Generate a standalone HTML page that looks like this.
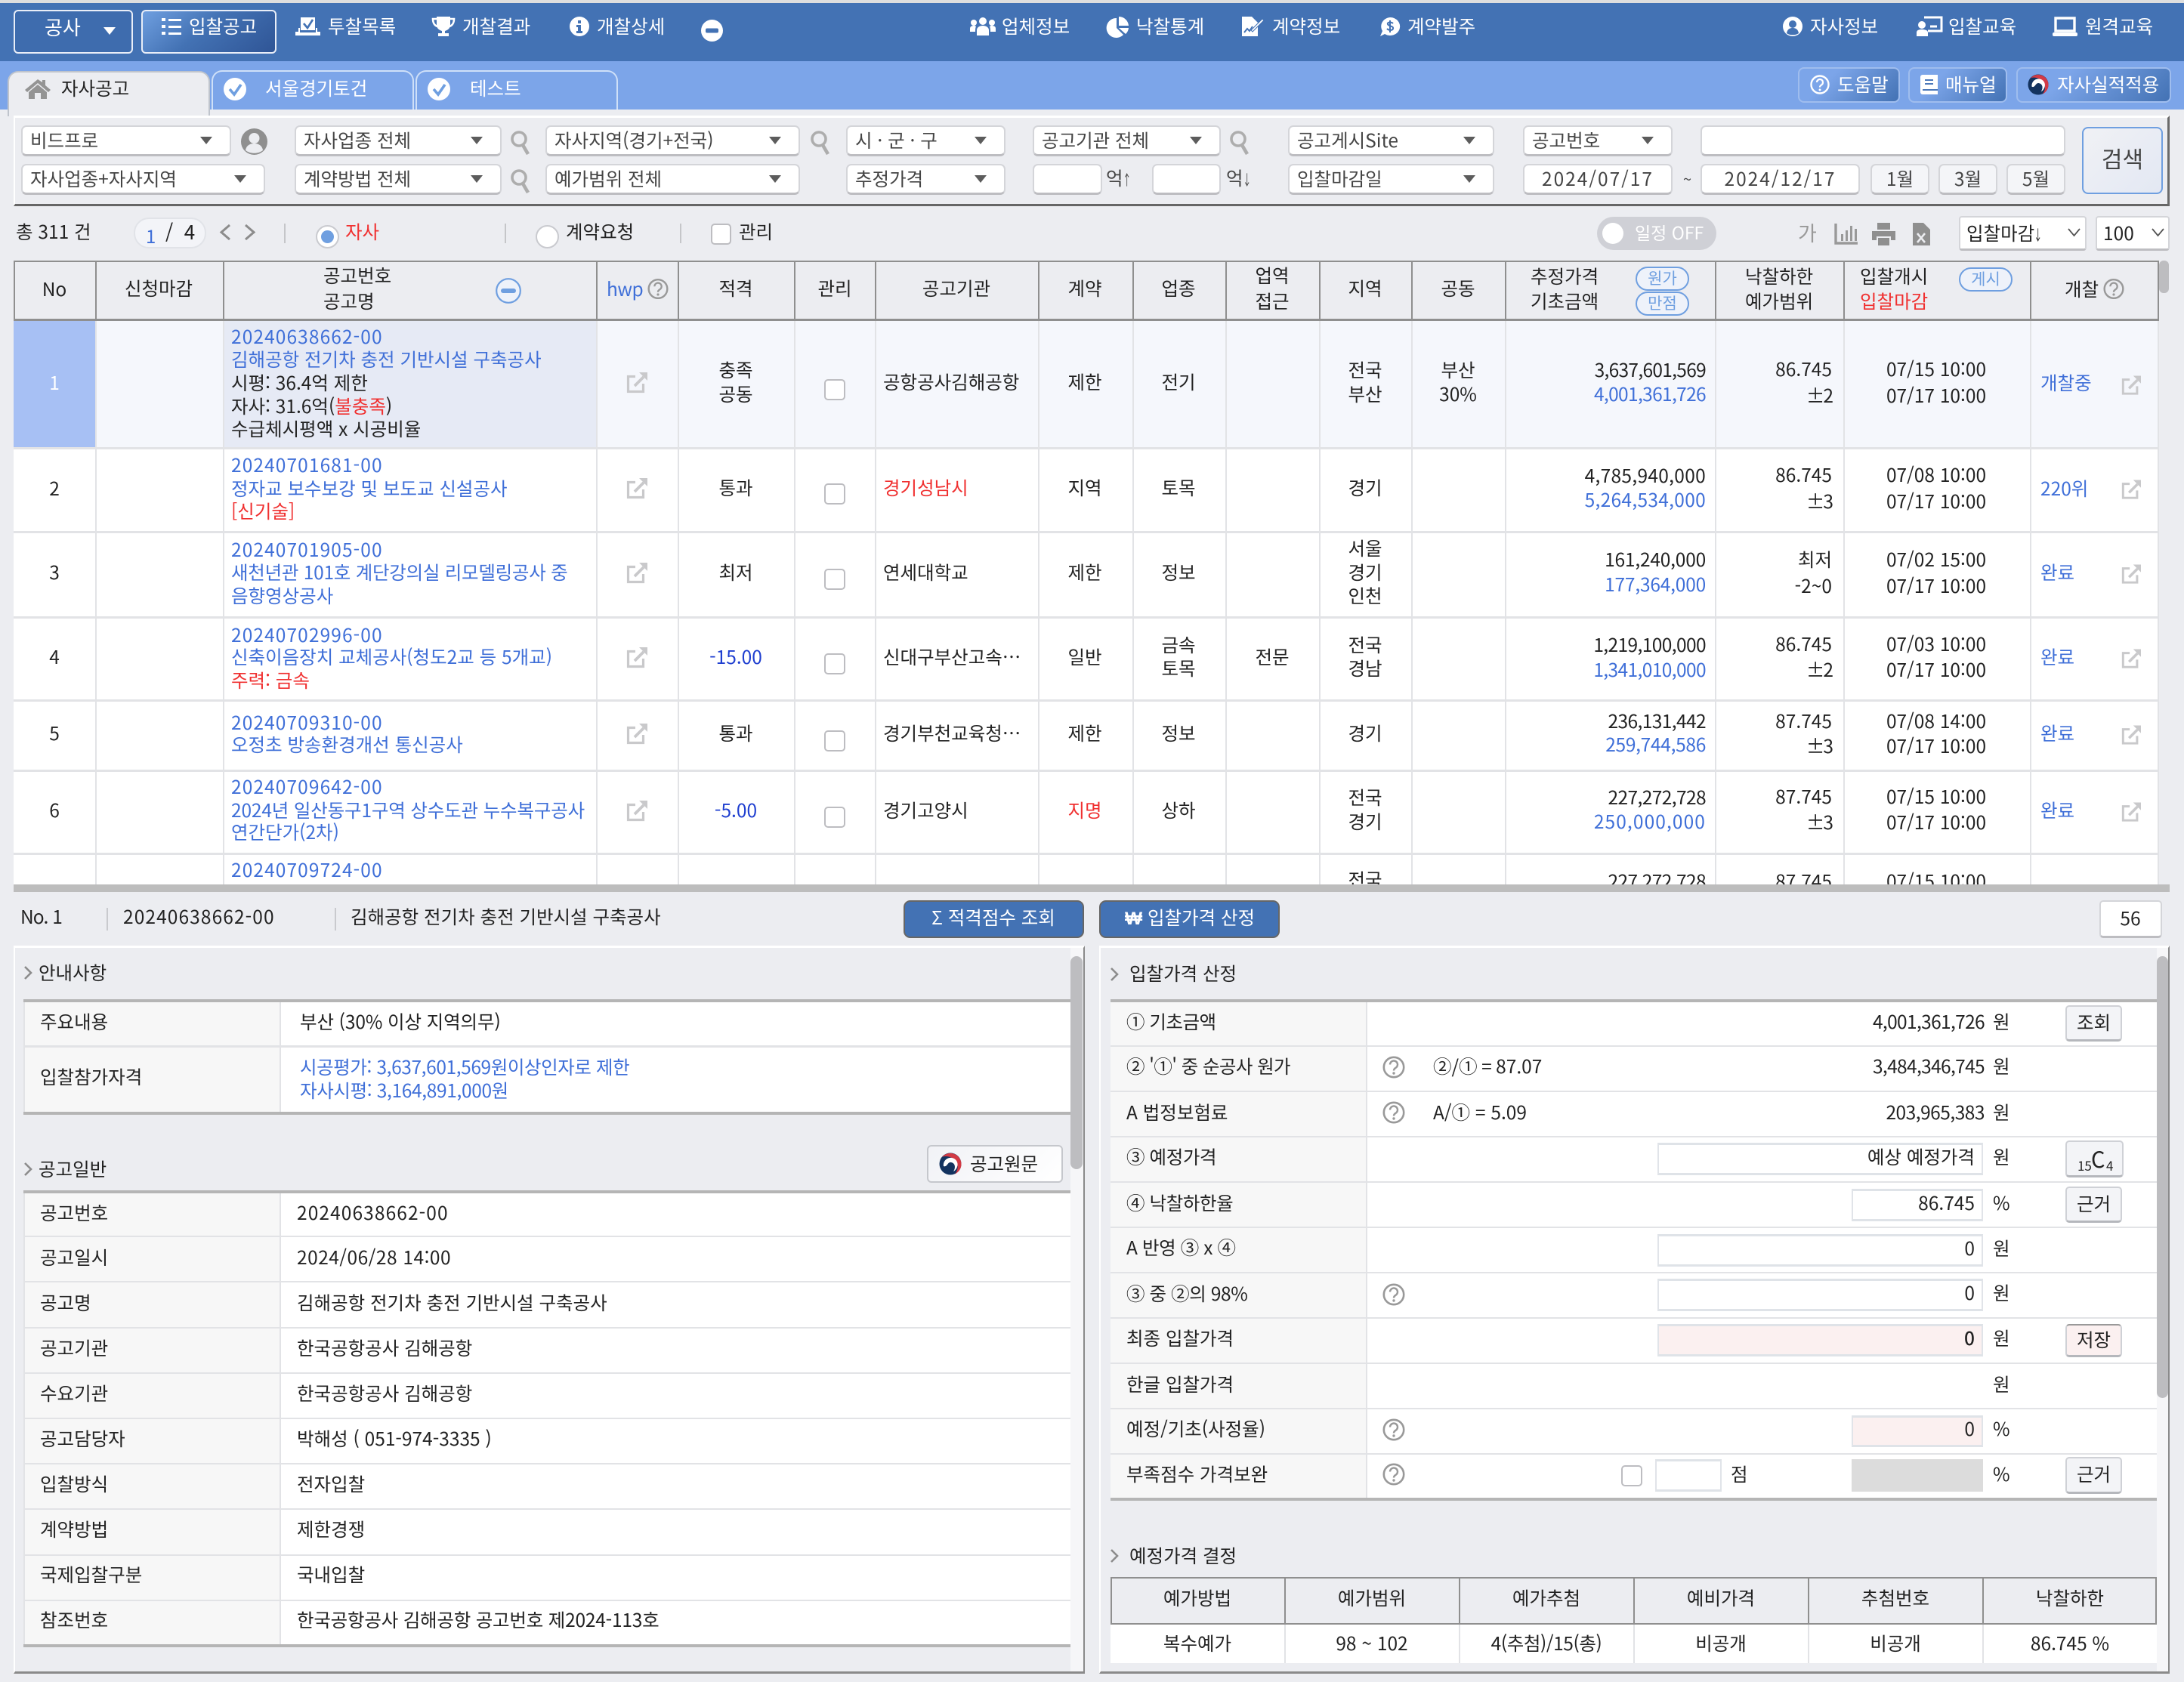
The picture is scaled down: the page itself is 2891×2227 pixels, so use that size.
<!DOCTYPE html>
<html lang="ko"><head><meta charset="utf-8"><title>입찰공고</title>
<style>
*{box-sizing:border-box}
html,body{margin:0;padding:0}
body{width:2891px;height:2227px;overflow:hidden;background:#ecedf1;position:relative;font-family:"Noto Sans CJK KR","Liberation Sans",sans-serif;font-size:24.5px;color:#222}
.a{position:absolute}
.t{position:absolute;white-space:nowrap;line-height:0}
.c{transform:translateX(-50%)}
.b{color:#3f6fd8}.r{color:#f03030}.w{color:#fff}.g{color:#444}
.s{position:absolute;background:#fff;border:2px solid #d4d5d9;border-bottom:3px solid #bdbdc1;border-radius:7px;line-height:36px;padding-left:10px;color:#444;white-space:nowrap;height:41px}
.s i{position:absolute;right:23px;top:13px;width:0;height:0;border-left:8px solid transparent;border-right:8px solid transparent;border-top:10px solid #5c5c5c}
.m{position:absolute;background:#f4f5f8;border:2px solid #d4d5d9;border-bottom:3px solid #bdbdc1;border-radius:7px;text-align:center;color:#444;white-space:nowrap}
.l{position:absolute}
.tb{position:absolute;background:#7ca5e9;border:2px solid #cfe0f8;border-bottom:0;border-radius:14px 14px 0 0}
.hb{position:absolute;border:2px solid #9fbdee;border-radius:8px;background:linear-gradient(135deg,#7ca5e9 30%,#4372b4 100%)}
.pill{position:absolute;border:2px solid #6f9fe0;border-radius:17px;background:#eef2fa;color:#6f9fe0;text-align:center;font-size:21px}
.cb{position:absolute;width:28px;height:28px;background:#fff;border:2px solid #bdbdc1;border-radius:5px}
.in{position:absolute;background:#fff;border:2px solid #e1e4e9;border-top:3px solid #dfe3e8;border-bottom:3px solid #dfe3e8;}
.btn{position:absolute;background:#f3f4f7;border:2px solid #cfd1d6;border-bottom:3px solid #b5b7bc;border-radius:5px;text-align:center;color:#222}
.ar{display:inline-block;font-size:19px;margin-left:-1px;transform:scaleX(.6);transform-origin:0 50%}
svg{position:absolute;overflow:visible}
</style></head><body>
<svg width="0" height="0" style="position:absolute"><defs>
<symbol id="ext" viewBox="0 0 28 28"><path d="M12 5.500H2.500v20h20V15" fill="none" stroke="#c9c9cb" stroke-width="3.200"/><path d="M11 18L23 6" fill="none" stroke="#c9c9cb" stroke-width="3.800"/><path d="M28 0v11L17 0z" fill="#c9c9cb"/></symbol>
<symbol id="q" viewBox="0 0 30 30"><circle cx="15" cy="15" r="13.200" fill="none" stroke="#999" stroke-width="2.600"/><path d="M10 11.500a5 5 0 1 1 7.500 4.300c-1.600 1-2.500 1.800-2.500 3.700" fill="none" stroke="#999" stroke-width="2.500"/><circle cx="15" cy="23" r="1.700" fill="#999"/></symbol>
<symbol id="mag" viewBox="0 0 26 34"><circle cx="11" cy="12" r="9" fill="none" stroke="#adadad" stroke-width="3.600"/><path d="M16 20l7 12" stroke="#adadad" stroke-width="4.600" fill="none"/></symbol>
<symbol id="tg" viewBox="0 0 30 30"><circle cx="15" cy="15" r="14.500" fill="#13335f"/><path d="M4 6A14.500 14.500 0 0 1 29.500 15 14.500 14.500 0 0 1 21 28.500C26 23 26 14 20 9 15 5 8 4 4 6z" fill="#d23a45"/><path d="M6 18C5 11 11 6 17 7c6 1 9 7 7 12-1 3-3 5-5 6 3-4 3-11-3-12-5-1-5 7-10 5z" fill="#fff"/></symbol>
<symbol id="chk" viewBox="0 0 30 30"><circle cx="15" cy="15" r="15" fill="#fff"/><path d="M8 15l6 7 9-13" fill="none" stroke="#6f9fe0" stroke-width="3.600"/></symbol>
</defs></svg>

<!-- top header -->
<div class="a" style="left:0;top:0;width:2891px;height:4px;background:#dedede"></div>
<div class="a" style="left:0;top:4px;width:2891px;height:77px;background:#4372b4"></div>
<div class="a" style="left:0;top:81px;width:2891px;height:64px;background:#7ca5e9"></div>

<div class="a" style="left:18px;top:13px;width:158px;height:58px;border:2px solid #e9eef8;border-radius:6px;background:#3e6cae"></div>
<div class="t w" style="left:59px;top:36px;font-size:26px">공사</div>
<div class="a" style="left:137px;top:36px;width:0;height:0;border-left:8px solid transparent;border-right:8px solid transparent;border-top:10px solid #fff"></div>
<div class="a" style="left:187px;top:13px;width:179px;height:58px;border:2px solid #e9eef8;border-radius:6px;background:linear-gradient(140deg,#6f9fe0 0%,#4372b4 45%,#2f5596 100%)"></div>
<svg style="left:214px;top:24px" width="27" height="22"><path d="M0 0h5v4H0zM0 9h5v4H0zM0 18h5v4H0zM9 1h17v3H9zM9 10h17v3H9zM9 19h17v3H9z" fill="#fff"/></svg>
<div class="t w" style="left:250px;top:35px">입찰공고</div>
<svg style="left:391px;top:23px" width="33" height="24"><path d="M7 0h19v17H7z" fill="#fff"/><path d="M11 8l5 6 7-11" fill="none" stroke="#4372b4" stroke-width="2.600"/><path d="M4 14v5H0v5h33v-5h-4v-5h-2v6H6v-6z" fill="#fff"/></svg>
<div class="t w" style="left:434px;top:35px">투찰목록</div>
<svg style="left:572px;top:22px" width="30" height="26"><path d="M6 0h18v11c0 5-4 7-7 8v3h5v4H8v-4h5v-3c-3-1-7-3-7-8z" fill="#fff"/><path d="M6 3H1c0 6 3 9 6 10M24 3h5c0 6-3 9-6 10" fill="none" stroke="#fff" stroke-width="2.600"/></svg>
<div class="t w" style="left:612px;top:35px">개찰결과</div>
<svg style="left:754px;top:22px" width="26" height="26"><circle cx="13" cy="13" r="13" fill="#fff"/><path d="M11 5h4v4h-4zM9 11h6v8h2v3H9v-3h2v-5H9z" fill="#4372b4"/></svg>
<div class="t w" style="left:790px;top:35px">개찰상세</div>
<svg style="left:928px;top:26px" width="29" height="29"><circle cx="14.500" cy="14.500" r="14.500" fill="#fff"/><rect x="6" y="11.500" width="17" height="6" rx="2" fill="#4372b4"/></svg>

<svg style="left:1284px;top:23px" width="34" height="24"><circle cx="17" cy="5" r="5" fill="#fff"/><circle cx="5" cy="7" r="4" fill="#fff"/><circle cx="29" cy="7" r="4" fill="#fff"/><path d="M9 24v-7c0-4 4-6 8-6s8 2 8 6v7zM0 19v-4c0-3 2-4 6-4l2 1c-1 2-1 4-1 7zM34 19v-4c0-3-2-4-6-4l-2 1c1 2 1 4 1 7z" fill="#fff"/></svg>
<div class="t w" style="left:1326px;top:35px">업체정보</div>
<svg style="left:1466px;top:22px" width="28" height="26"><path d="M12 2v13l9 9A13 13 0 1 1 12 2z" fill="#fff"/><path d="M15 0a13 13 0 0 1 13 12H15zM15 15h13a13 13 0 0 1-4 8z" fill="#fff"/></svg>
<div class="t w" style="left:1504px;top:35px">낙찰통계</div>
<svg style="left:1644px;top:22px" width="30" height="26"><path d="M0 0h13l8 8v18H0z" fill="#fff"/><path d="M3 21l4-5 3 3 4-6" stroke="#4372b4" stroke-width="2" fill="none"/><path d="M12 18L27 3l2 2-15 15z" fill="#fff" stroke="#4372b4"/></svg>
<div class="t w" style="left:1684px;top:35px">계약정보</div>
<svg style="left:1827px;top:23px" width="26" height="25"><path d="M13 0a13 12 0 1 1-7 22l-6 3 3-7A13 12 0 0 1 13 0z" fill="#fff"/><path d="M17 8c-2-2-8-2-7 1 1 3 8 2 7 6-1 3-6 2-8 0M13 4v16" stroke="#4372b4" stroke-width="2" fill="none"/></svg>
<div class="t w" style="left:1863px;top:35px">계약발주</div>
<svg style="left:2360px;top:22px" width="26" height="26"><circle cx="13" cy="13" r="13" fill="#fff"/><circle cx="13" cy="10" r="5" fill="#4372b4"/><path d="M5 22c1-6 5-7 8-7s7 1 8 7c-4 3-12 3-16 0z" fill="#4372b4"/></svg>
<div class="t w" style="left:2396px;top:35px">자사정보</div>
<svg style="left:2537px;top:22px" width="34" height="26"><path d="M10 1h23v18H15" fill="none" stroke="#fff" stroke-width="3"/><path d="M18 13h9" stroke="#fff" stroke-width="3"/><circle cx="7" cy="11" r="5" fill="#fff"/><path d="M0 26v-5c0-3 3-4 7-4s8 1 8 4v5z" fill="#fff"/></svg>
<div class="t w" style="left:2579px;top:35px">입찰교육</div>
<svg style="left:2717px;top:22px" width="33" height="26"><path d="M4 2h25v17H4z" fill="none" stroke="#fff" stroke-width="3.400"/><rect x="0" y="21" width="33" height="5" rx="2" fill="#fff"/></svg>
<div class="t w" style="left:2760px;top:35px">원격교육</div>

<!-- tabs -->
<div class="a" style="left:10px;top:94px;width:268px;height:60px;background:#ecedf1;border:2px solid #bfc4cc;border-bottom:0;border-radius:14px 14px 0 0"></div>
<svg style="left:33px;top:105px" width="34" height="26"><path d="M17 0L0 14l3 3L17 5l14 12 3-3-7-6V1h-4v3z" fill="#949494"/><path d="M5 17L17 7l12 10v9h-8v-8h-8v8H5z" fill="#949494"/></svg>
<div class="t" style="left:81px;top:117px">자사공고</div>
<div class="tb" style="left:280px;top:93px;width:268px;height:52px"></div>
<svg style="left:296px;top:103px" width="30" height="30"><use href="#chk"/></svg>
<div class="t w" style="left:351px;top:117px">서울경기토건</div>
<div class="tb" style="left:550px;top:93px;width:268px;height:52px"></div>
<svg style="left:566px;top:103px" width="30" height="30"><use href="#chk"/></svg>
<div class="t w" style="left:622px;top:117px">테스트</div>

<div class="hb" style="left:2380px;top:89px;width:135px;height:47px"></div>
<svg style="left:2396px;top:99px" width="26" height="26"><circle cx="13" cy="13" r="11.500" fill="none" stroke="#fff" stroke-width="2.400"/><path d="M9 10a4 4 0 1 1 6 3.500c-1.500 1-2 1.500-2 3" fill="none" stroke="#fff" stroke-width="2.200"/><circle cx="13" cy="20" r="1.500" fill="#fff"/></svg>
<div class="t w" style="left:2432px;top:112px">도움말</div>
<div class="hb" style="left:2526px;top:89px;width:131px;height:47px"></div>
<svg style="left:2542px;top:99px" width="23" height="26"><path d="M3 0h20v26H3a3 3 0 0 1-3-3V3a3 3 0 0 1 3-3z" fill="#fff"/><path d="M6 6h11v2H6zM6 11h11v2H6z" fill="#4b78ba"/><path d="M3 20h20" stroke="#4b78ba" stroke-width="2"/></svg>
<div class="t w" style="left:2575px;top:112px">매뉴얼</div>
<div class="hb" style="left:2669px;top:89px;width:205px;height:47px"></div>
<svg style="left:2683px;top:98px" width="30" height="28"><use href="#tg"/></svg>
<div class="t w" style="left:2723px;top:112px">자사실적적용</div>

<!-- search panel -->
<div class="a" style="left:18px;top:153px;width:2854px;height:120px;border-top:3px solid #fff;border-left:2px solid #fff;border-right:3px solid #6a6a6a;border-bottom:3px solid #666"></div>

<div class="s" style="left:28px;top:166px;width:278px">비드프로<i></i></div>
<svg style="left:319px;top:170px" width="35" height="35"><circle cx="17.500" cy="17.500" r="17.500" fill="#8f8f8f"/><circle cx="17.500" cy="13" r="7" fill="#ecedf1"/><path d="M6 29c1-7 7-9 11.500-9S28 22 29 29c-6 5-17 5-23 0z" fill="#ecedf1"/></svg>
<div class="s" style="left:28px;top:217px;width:323px">자사업종+자사지역<i></i></div>
<div class="s" style="left:390px;top:166px;width:274px">자사업종 전체<i></i></div>
<div class="s" style="left:390px;top:217px;width:274px">계약방법 전체<i></i></div>
<svg style="left:676px;top:172px" width="26" height="34"><use href="#mag"/></svg>
<svg style="left:676px;top:223px" width="26" height="34"><use href="#mag"/></svg>
<div class="s" style="left:722px;top:166px;width:337px">자사지역(경기+전국)<i></i></div>
<div class="s" style="left:722px;top:217px;width:337px">예가범위 전체<i></i></div>
<svg style="left:1073px;top:172px" width="26" height="34"><use href="#mag"/></svg>
<div class="s" style="left:1120px;top:166px;width:211px">시 · 군 · 구<i></i></div>
<div class="s" style="left:1120px;top:217px;width:211px">추정가격<i></i></div>
<div class="s" style="left:1367px;top:166px;width:249px">공고기관 전체<i></i></div>
<svg style="left:1628px;top:172px" width="26" height="34"><use href="#mag"/></svg>
<div class="s" style="left:1367px;top:217px;width:92px"></div>
<div class="t g" style="left:1464px;top:236px">억<span class="ar">↑</span></div>
<div class="s" style="left:1525px;top:217px;width:91px"></div>
<div class="t g" style="left:1623px;top:236px">억<span class="ar">↓</span></div>
<div class="s" style="left:1705px;top:166px;width:273px">공고게시Site<i></i></div>
<div class="s" style="left:1705px;top:217px;width:273px">입찰마감일<i></i></div>
<div class="s" style="left:2016px;top:166px;width:198px">공고번호<i></i></div>
<div class="s" style="left:2016px;top:217px;width:198px;padding-left:0;text-align:center;letter-spacing:2px">2024/07/17</div>
<div class="t g" style="left:2228px;top:237px;font-size:20px">~</div>
<div class="s" style="left:2251px;top:166px;width:483px"></div>
<div class="s" style="left:2251px;top:217px;width:211px;padding-left:0;text-align:center;letter-spacing:2px">2024/12/17</div>
<div class="m" style="left:2476px;top:217px;width:78px;height:41px;line-height:36px">1월</div>
<div class="m" style="left:2566px;top:217px;width:78px;height:41px;line-height:36px">3월</div>
<div class="m" style="left:2656px;top:217px;width:78px;height:41px;line-height:36px">5월</div>
<div class="a" style="left:2756px;top:168px;width:107px;height:89px;border:2px solid #6f9fe0;border-radius:8px;background:linear-gradient(135deg,#f0f1f5,#e3e8f3);text-align:center;line-height:78px;font-size:30px;color:#444">검색</div>

<!-- toolbar -->
<div class="t" style="left:21px;top:307px">총 311 건</div>
<div class="a" style="left:177px;top:288px;width:96px;height:41px;border:2px solid #e1e3e8;border-radius:20px;background:#f3f4f8"></div>
<div class="t b" style="left:193px;top:312px;font-size:24px">1</div>
<div class="t" style="left:219px;top:307px;font-size:26px">/ &nbsp;4</div>
<svg style="left:291px;top:297px" width="48" height="22"><path d="M13 1L2 10.500 13 20M34 1l11 9.500L34 20" fill="none" stroke="#8c8c8c" stroke-width="3"/></svg>
<div class="a" style="left:376px;top:296px;width:2px;height:26px;background:#c5c6c9"></div>
<div class="a" style="left:418px;top:298px;width:31px;height:31px;border:2px solid #c9cacf;border-radius:50%;background:#fff"></div>
<div class="a" style="left:425px;top:305px;width:17px;height:17px;border-radius:50%;background:#6f9fe0"></div>
<div class="t r" style="left:457px;top:307px">자사</div>
<div class="a" style="left:668px;top:296px;width:2px;height:26px;background:#c5c6c9"></div>
<div class="a" style="left:709px;top:298px;width:31px;height:31px;border:2px solid #c9cacf;border-radius:50%;background:#fff"></div>
<div class="t" style="left:749px;top:307px">계약요청</div>
<div class="a" style="left:900px;top:296px;width:2px;height:26px;background:#c5c6c9"></div>
<div class="cb" style="left:941px;top:296px;width:27px"></div>
<div class="t" style="left:978px;top:307px">관리</div>

<div class="a" style="left:2114px;top:287px;width:158px;height:44px;border-radius:22px;background:#cfd0d6"></div>
<div class="a" style="left:2121px;top:295px;width:28px;height:28px;border-radius:50%;background:#fff"></div>
<div class="t w" style="left:2164px;top:307px;font-size:23px">일정 OFF</div>
<div class="t" style="left:2380px;top:308px;color:#999;font-size:27px">가</div>
<svg style="left:2428px;top:296px" width="31" height="28"><path d="M2 0v26h29" fill="none" stroke="#999" stroke-width="3.400"/><path d="M9 14h3v9H9zM15 9h3v14h-3zM21 3h3v20h-3zM27 7h3v16h-3z" fill="#999"/></svg>
<svg style="left:2478px;top:295px" width="31" height="30"><path d="M7 0h17v9H7z" fill="#8f8f8f"/><path d="M0 11h31v12h-6v-5H6v5H0z" fill="#8f8f8f"/><path d="M8 20h15v10H8z" fill="#8f8f8f"/></svg>
<svg style="left:2532px;top:295px" width="23" height="30"><path d="M0 0h14l9 9v21H0z" fill="#8f8f8f"/><path d="M6 14l10 12M16 14L6 26" stroke="#ecedf1" stroke-width="2.600"/></svg>
<div class="a" style="left:2593px;top:286px;width:169px;height:46px;background:#fff;border:2px solid #d4d5d9;border-bottom:3px solid #bdbdc1;border-radius:4px"></div>
<div class="t" style="left:2603px;top:309px">입찰마감<span class="ar">↓</span></div>
<svg style="left:2737px;top:302px" width="17" height="11"><path d="M1 1l7.500 9L16 1" fill="none" stroke="#555" stroke-width="1.800"/></svg>
<div class="a" style="left:2774px;top:286px;width:98px;height:46px;background:#fff;border:2px solid #d4d5d9;border-bottom:3px solid #bdbdc1;border-radius:4px"></div>
<div class="t" style="left:2784px;top:309px">100</div>
<svg style="left:2848px;top:302px" width="17" height="11"><path d="M1 1l7.500 9L16 1" fill="none" stroke="#555" stroke-width="1.800"/></svg>

<!-- main table backgrounds -->
<div class="a" style="left:18px;top:423px;width:2838px;height:748px;background:#fff"></div>
<div class="a" style="left:18px;top:423px;width:2838px;height:170px;background:#f5f7fc"></div>
<div class="a" style="left:18px;top:423px;width:108px;height:170px;background:#a7c0f4"></div>
<div class="a" style="left:295px;top:423px;width:494px;height:170px;background:#e6eaf5"></div>
<!-- horizontal row lines -->
<div class="a" style="left:18px;top:592px;width:2838px;height:3px;background:#e2e3e6"></div>
<div class="a" style="left:18px;top:703px;width:2838px;height:3px;background:#e2e3e6"></div>
<div class="a" style="left:18px;top:816px;width:2838px;height:3px;background:#e2e3e6"></div>
<div class="a" style="left:18px;top:926px;width:2838px;height:3px;background:#e2e3e6"></div>
<div class="a" style="left:18px;top:1019px;width:2838px;height:3px;background:#e2e3e6"></div>
<div class="a" style="left:18px;top:1129px;width:2838px;height:3px;background:#e2e3e6"></div>
<!-- vertical lines -->
<div class="l" style="left:126px;top:423px;width:2px;height:748px;background:#e2e3e6"></div>
<div class="l" style="left:295px;top:423px;width:2px;height:748px;background:#e2e3e6"></div>
<div class="l" style="left:789px;top:423px;width:2px;height:748px;background:#e2e3e6"></div>
<div class="l" style="left:897px;top:423px;width:2px;height:748px;background:#e2e3e6"></div>
<div class="l" style="left:1051px;top:423px;width:2px;height:748px;background:#e2e3e6"></div>
<div class="l" style="left:1158px;top:423px;width:2px;height:748px;background:#e2e3e6"></div>
<div class="l" style="left:1374px;top:423px;width:2px;height:748px;background:#e2e3e6"></div>
<div class="l" style="left:1499px;top:423px;width:2px;height:748px;background:#e2e3e6"></div>
<div class="l" style="left:1622px;top:423px;width:2px;height:748px;background:#e2e3e6"></div>
<div class="l" style="left:1746px;top:423px;width:2px;height:748px;background:#e2e3e6"></div>
<div class="l" style="left:1868px;top:423px;width:2px;height:748px;background:#e2e3e6"></div>
<div class="l" style="left:1992px;top:423px;width:2px;height:748px;background:#e2e3e6"></div>
<div class="l" style="left:2270px;top:423px;width:2px;height:748px;background:#e2e3e6"></div>
<div class="l" style="left:2440px;top:423px;width:2px;height:748px;background:#e2e3e6"></div>
<div class="l" style="left:2687px;top:423px;width:2px;height:748px;background:#e2e3e6"></div>
<div class="l" style="left:2856px;top:423px;width:2px;height:748px;background:#e2e3e6"></div>
<!-- header -->
<div class="a" style="left:18px;top:345px;width:2840px;height:80px;border:2px solid #8f8f8f;border-bottom:3px solid #8f8f8f"></div>
<div class="l" style="left:126px;top:345px;width:2px;height:79px;background:#8f8f8f"></div>
<div class="l" style="left:295px;top:345px;width:2px;height:79px;background:#8f8f8f"></div>
<div class="l" style="left:789px;top:345px;width:2px;height:79px;background:#8f8f8f"></div>
<div class="l" style="left:897px;top:345px;width:2px;height:79px;background:#8f8f8f"></div>
<div class="l" style="left:1051px;top:345px;width:2px;height:79px;background:#8f8f8f"></div>
<div class="l" style="left:1158px;top:345px;width:2px;height:79px;background:#8f8f8f"></div>
<div class="l" style="left:1374px;top:345px;width:2px;height:79px;background:#8f8f8f"></div>
<div class="l" style="left:1499px;top:345px;width:2px;height:79px;background:#8f8f8f"></div>
<div class="l" style="left:1622px;top:345px;width:2px;height:79px;background:#8f8f8f"></div>
<div class="l" style="left:1746px;top:345px;width:2px;height:79px;background:#8f8f8f"></div>
<div class="l" style="left:1868px;top:345px;width:2px;height:79px;background:#8f8f8f"></div>
<div class="l" style="left:1992px;top:345px;width:2px;height:79px;background:#8f8f8f"></div>
<div class="l" style="left:2270px;top:345px;width:2px;height:79px;background:#8f8f8f"></div>
<div class="l" style="left:2440px;top:345px;width:2px;height:79px;background:#8f8f8f"></div>
<div class="l" style="left:2687px;top:345px;width:2px;height:79px;background:#8f8f8f"></div>
<div class="a" style="left:2858px;top:345px;width:13px;height:43px;background:#bdbdc0;border-radius:6px"></div>

<div class="t c" style="left:72px;top:383px">No</div>
<div class="t c" style="left:210px;top:382px">신청마감</div>
<div class="t" style="left:428px;top:365px">공고번호</div>
<div class="t" style="left:428px;top:399px">공고명</div>
<svg style="left:656px;top:368px" width="34" height="34"><circle cx="17" cy="17" r="15.800" fill="#eef2fa" stroke="#6f9fe0" stroke-width="2.200"/><rect x="7" y="14" width="20" height="6" rx="3" fill="#6f9fe0"/></svg>
<div class="t b" style="left:803px;top:383px;letter-spacing:-.5px">hwp</div>
<svg style="left:857px;top:368px" width="28" height="29"><use href="#q"/></svg>
<div class="t c" style="left:974px;top:382px">적격</div>
<div class="t c" style="left:1105px;top:382px">관리</div>
<div class="t c" style="left:1266px;top:382px">공고기관</div>
<div class="t c" style="left:1436px;top:382px">계약</div>
<div class="t c" style="left:1560px;top:382px">업종</div>
<div class="t c" style="left:1684px;top:365px">업역</div>
<div class="t c" style="left:1684px;top:399px">접근</div>
<div class="t c" style="left:1807px;top:382px">지역</div>
<div class="t c" style="left:1930px;top:382px">공동</div>
<div class="t" style="left:2026px;top:366px">추정가격</div>
<div class="t" style="left:2026px;top:399px">기초금액</div>
<div class="pill" style="left:2165px;top:353px;width:71px;height:32px;line-height:26px">원가</div>
<div class="pill" style="left:2165px;top:386px;width:71px;height:32px;line-height:26px">만점</div>
<div class="t" style="left:2310px;top:366px">낙찰하한</div>
<div class="t" style="left:2310px;top:399px">예가범위</div>
<div class="t" style="left:2462px;top:366px">입찰개시</div>
<div class="t r" style="left:2462px;top:399px">입찰마감</div>
<div class="pill" style="left:2593px;top:354px;width:71px;height:32px;line-height:26px">게시</div>
<div class="t" style="left:2733px;top:383px">개찰</div>
<svg style="left:2784px;top:368px" width="28" height="29"><use href="#q"/></svg>

<!-- Row 1 -->
<div class="t c w" style="left:72px;top:507px">1</div>
<div class="t b" style="left:306px;top:446px;letter-spacing:1.100px">20240638662-00</div>
<div class="t b" style="left:306px;top:476px">김해공항 전기차 충전 기반시설 구축공사</div>
<div class="t" style="left:306px;top:507px">시평: 36.4억 제한</div>
<div class="t" style="left:306px;top:538px">자사: 31.6억(<span class="r">불충족</span>)</div>
<div class="t" style="left:306px;top:568px">수급체시평액 x 시공비율</div>
<svg style="left:829px;top:493px" width="28" height="28"><use href="#ext"/></svg>
<div class="t c" style="left:974px;top:490px">충족</div>
<div class="t c" style="left:974px;top:522px">공동</div>
<div class="cb" style="left:1091px;top:502px"></div>
<div class="t" style="left:1169px;top:506px">공항공사김해공항</div>
<div class="t c" style="left:1436px;top:506px">제한</div>
<div class="t c" style="left:1560px;top:506px">전기</div>
<div class="t c" style="left:1807px;top:490px">전국</div>
<div class="t c" style="left:1807px;top:522px">부산</div>
<div class="t c" style="left:1930px;top:490px">부산</div>
<div class="t c" style="left:1930px;top:522px">30%</div>
<div class="t" style="right:633px;top:490px;letter-spacing:-.7px">3,637,601,569</div>
<div class="t b" style="right:633px;top:522px;letter-spacing:-.65px">4,001,361,726</div>
<div class="t" style="right:466px;top:489px">86.745</div>
<div class="t" style="right:466px;top:524px;letter-spacing:-2px">±2</div>
<div class="t c" style="left:2563px;top:489px">07/15 10:00</div>
<div class="t c" style="left:2563px;top:524px">07/17 10:00</div>
<div class="t b" style="left:2701px;top:507px">개찰중</div>
<svg style="left:2808px;top:497px" width="26" height="27"><use href="#ext"/></svg>

<!-- Row 2 -->
<div class="t c" style="left:72px;top:647px">2</div>
<div class="t b" style="left:306px;top:616px;letter-spacing:1.100px">20240701681-00</div>
<div class="t b" style="left:306px;top:647px">정자교 보수보강 및 보도교 신설공사</div>
<div class="t r" style="left:306px;top:677px">[신기술]</div>
<svg style="left:829px;top:633px" width="28" height="28"><use href="#ext"/></svg>
<div class="t c" style="left:974px;top:646px">통과</div>
<div class="cb" style="left:1091px;top:640px"></div>
<div class="t r" style="left:1169px;top:646px">경기성남시</div>
<div class="t c" style="left:1436px;top:646px">지역</div>
<div class="t c" style="left:1560px;top:646px">토목</div>
<div class="t c" style="left:1807px;top:646px">경기</div>
<div class="t" style="right:633px;top:630px;letter-spacing:.3px">4,785,940,000</div>
<div class="t b" style="right:633px;top:662px;letter-spacing:.3px">5,264,534,000</div>
<div class="t" style="right:466px;top:629px">86.745</div>
<div class="t" style="right:466px;top:664px;letter-spacing:-2px">±3</div>
<div class="t c" style="left:2563px;top:629px">07/08 10:00</div>
<div class="t c" style="left:2563px;top:664px">07/17 10:00</div>
<div class="t b" style="left:2701px;top:647px">220위</div>
<svg style="left:2808px;top:635px" width="26" height="27"><use href="#ext"/></svg>

<!-- Row 3 -->
<div class="t c" style="left:72px;top:758px">3</div>
<div class="t b" style="left:306px;top:728px;letter-spacing:1.100px">20240701905-00</div>
<div class="t b" style="left:306px;top:758px;letter-spacing:-.25px">새천년관 101호 계단강의실 리모델링공사 중</div>
<div class="t b" style="left:306px;top:789px">음향영상공사</div>
<svg style="left:829px;top:745px" width="28" height="28"><use href="#ext"/></svg>
<div class="t c" style="left:974px;top:758px">최저</div>
<div class="cb" style="left:1091px;top:753px"></div>
<div class="t" style="left:1169px;top:758px">연세대학교</div>
<div class="t c" style="left:1436px;top:758px">제한</div>
<div class="t c" style="left:1560px;top:758px">정보</div>
<div class="t c" style="left:1807px;top:726px">서울</div>
<div class="t c" style="left:1807px;top:758px">경기</div>
<div class="t c" style="left:1807px;top:789px">인천</div>
<div class="t" style="right:633px;top:741px;letter-spacing:-.2px">161,240,000</div>
<div class="t b" style="right:633px;top:774px;letter-spacing:-.2px">177,364,000</div>
<div class="t" style="right:466px;top:741px">최저</div>
<div class="t" style="right:466px;top:776px">-2~0</div>
<div class="t c" style="left:2563px;top:741px">07/02 15:00</div>
<div class="t c" style="left:2563px;top:776px">07/17 10:00</div>
<div class="t b" style="left:2701px;top:758px">완료</div>
<svg style="left:2808px;top:747px" width="26" height="27"><use href="#ext"/></svg>

<!-- Row 4 -->
<div class="t c" style="left:72px;top:870px">4</div>
<div class="t b" style="left:306px;top:841px;letter-spacing:1.100px">20240702996-00</div>
<div class="t b" style="left:306px;top:870px">신축이음장치 교체공사(청도2교 등 5개교)</div>
<div class="t r" style="left:306px;top:901px">주력: 금속</div>
<svg style="left:829px;top:857px" width="28" height="28"><use href="#ext"/></svg>
<div class="t c b" style="left:974px;top:870px;color:#1f3fd0">-15.00</div>
<div class="cb" style="left:1091px;top:865px"></div>
<div class="t" style="left:1169px;top:870px">신대구부산고속⋯</div>
<div class="t c" style="left:1436px;top:870px">일반</div>
<div class="t c" style="left:1560px;top:854px">금속</div>
<div class="t c" style="left:1560px;top:885px">토목</div>
<div class="t c" style="left:1684px;top:870px">전문</div>
<div class="t c" style="left:1807px;top:854px">전국</div>
<div class="t c" style="left:1807px;top:885px">경남</div>
<div class="t" style="right:633px;top:854px;letter-spacing:-.6px">1,219,100,000</div>
<div class="t b" style="right:633px;top:887px;letter-spacing:-.6px">1,341,010,000</div>
<div class="t" style="right:466px;top:853px">86.745</div>
<div class="t" style="right:466px;top:887px;letter-spacing:-2px">±2</div>
<div class="t c" style="left:2563px;top:853px">07/03 10:00</div>
<div class="t c" style="left:2563px;top:887px">07/17 10:00</div>
<div class="t b" style="left:2701px;top:870px">완료</div>
<svg style="left:2808px;top:859px" width="26" height="27"><use href="#ext"/></svg>

<!-- Row 5 -->
<div class="t c" style="left:72px;top:971px">5</div>
<div class="t b" style="left:306px;top:957px;letter-spacing:1.100px">20240709310-00</div>
<div class="t b" style="left:306px;top:986px">오정초 방송환경개선 통신공사</div>
<svg style="left:829px;top:958px" width="28" height="28"><use href="#ext"/></svg>
<div class="t c" style="left:974px;top:971px">통과</div>
<div class="cb" style="left:1091px;top:967px"></div>
<div class="t" style="left:1169px;top:971px">경기부천교육청⋯</div>
<div class="t c" style="left:1436px;top:971px">제한</div>
<div class="t c" style="left:1560px;top:971px">정보</div>
<div class="t c" style="left:1807px;top:971px">경기</div>
<div class="t" style="right:633px;top:955px;letter-spacing:-.6px">236,131,442</div>
<div class="t b" style="right:633px;top:986px;letter-spacing:-.3px">259,744,586</div>
<div class="t" style="right:466px;top:955px">87.745</div>
<div class="t" style="right:466px;top:988px;letter-spacing:-2px">±3</div>
<div class="t c" style="left:2563px;top:955px">07/08 14:00</div>
<div class="t c" style="left:2563px;top:988px">07/17 10:00</div>
<div class="t b" style="left:2701px;top:971px">완료</div>
<svg style="left:2808px;top:960px" width="26" height="27"><use href="#ext"/></svg>

<!-- Row 6 -->
<div class="t c" style="left:72px;top:1073px">6</div>
<div class="t b" style="left:306px;top:1042px;letter-spacing:1.100px">20240709642-00</div>
<div class="t b" style="left:306px;top:1073px;letter-spacing:-.15px">2024년 일산동구1구역 상수도관 누수복구공사</div>
<div class="t b" style="left:306px;top:1102px">연간단가(2차)</div>
<svg style="left:829px;top:1060px" width="28" height="28"><use href="#ext"/></svg>
<div class="t c" style="left:974px;top:1073px;color:#1f3fd0">-5.00</div>
<div class="cb" style="left:1091px;top:1068px"></div>
<div class="t" style="left:1169px;top:1073px">경기고양시</div>
<div class="t c r" style="left:1436px;top:1073px">지명</div>
<div class="t c" style="left:1560px;top:1073px">상하</div>
<div class="t c" style="left:1807px;top:1056px">전국</div>
<div class="t c" style="left:1807px;top:1088px">경기</div>
<div class="t" style="right:633px;top:1056px;letter-spacing:-.6px">227,272,728</div>
<div class="t b" style="right:633px;top:1088px;letter-spacing:1.100px">250,000,000</div>
<div class="t" style="right:466px;top:1055px">87.745</div>
<div class="t" style="right:466px;top:1089px;letter-spacing:-2px">±3</div>
<div class="t c" style="left:2563px;top:1055px">07/15 10:00</div>
<div class="t c" style="left:2563px;top:1089px">07/17 10:00</div>
<div class="t b" style="left:2701px;top:1073px">완료</div>
<svg style="left:2808px;top:1062px" width="26" height="27"><use href="#ext"/></svg>

<!-- Row 7 clipped -->
<div class="t b" style="left:306px;top:1152px;letter-spacing:1.100px">20240709724-00</div>
<div class="t c" style="left:1807px;top:1165px">전국</div>
<div class="t" style="right:633px;top:1167px;letter-spacing:-.6px">227,272,728</div>
<div class="t" style="right:466px;top:1167px">87.745</div>
<div class="t c" style="left:2563px;top:1167px">07/15 10:00</div>
<div class="a" style="left:0;top:1171px;width:2891px;height:60px;background:#ecedf1"></div>
<div class="a" style="left:18px;top:1171px;width:2854px;height:10px;background:#bdbdbd"></div>

<!-- detail bar -->
<div class="t" style="left:27px;top:1214px;letter-spacing:-1px">No. 1</div>
<div class="a" style="left:141px;top:1202px;width:2px;height:30px;background:#c9cace"></div>
<div class="t" style="left:163px;top:1214px;letter-spacing:1.100px">20240638662-00</div>
<div class="a" style="left:443px;top:1202px;width:2px;height:30px;background:#c9cace"></div>
<div class="t" style="left:464px;top:1214px">김해공항 전기차 충전 기반시설 구축공사</div>
<div class="a" style="left:1196px;top:1192px;width:239px;height:50px;background:#4372b4;border:2px solid #666;border-radius:9px"></div>
<div class="t c w" style="left:1315px;top:1215px">Σ 적격점수 조회</div>
<div class="a" style="left:1455px;top:1192px;width:239px;height:50px;background:#4372b4;border:2px solid #666;border-radius:9px"></div>
<div class="t c w" style="left:1575px;top:1215px"><span style="font-family:'Liberation Sans',sans-serif;font-weight:700">₩</span> 입찰가격 산정</div>
<div class="a" style="left:2779px;top:1192px;width:83px;height:50px;background:#fff;border:2px solid #d4d5d9;border-bottom:3px solid #bdbdc1;border-radius:5px"></div>
<div class="t c" style="left:2820px;top:1216px">56</div>

<!-- Left panel -->
<div class="a" style="left:18px;top:1252px;width:1418px;height:964px;border-top:3px solid #fff;border-left:2px solid #fff;border-right:2px solid #8a8a8a;border-bottom:3px solid #8a8a8a"></div>
<div class="a" style="left:1417px;top:1255px;width:17px;height:958px;background:#f6f6f8"></div>
<div class="a" style="left:1417px;top:1266px;width:16px;height:282px;background:#bdbdc0;border-radius:8px"></div>
<svg style="left:31px;top:1279px" width="12" height="18"><path d="M2 1l8 8-8 8" fill="none" stroke="#8c8c8c" stroke-width="2.600"/></svg>
<div class="t" style="left:51px;top:1288px">안내사항</div>
<div class="a" style="left:31px;top:1323px;width:1386px;height:4px;background:#b5b5b5"></div>
<div class="a" style="left:31px;top:1327px;width:1386px;height:145px;background:#fff"></div>
<div class="a" style="left:31px;top:1327px;width:341px;height:145px;background:#f7f7f7;border-left:2px solid #e2e3e6;border-right:2px solid #e2e3e6"></div>
<div class="a" style="left:31px;top:1384px;width:1386px;height:3px;background:#e2e3e6"></div>
<div class="a" style="left:31px;top:1472px;width:1386px;height:4px;background:#b5b5b5"></div>
<div class="t" style="left:53px;top:1353px">주요내용</div>
<div class="t" style="left:397px;top:1353px;letter-spacing:-.1px">부산 (30% 이상 지역의무)</div>
<div class="t" style="left:53px;top:1426px">입찰참가자격</div>
<div class="t b" style="left:397px;top:1413px;letter-spacing:-.4px">시공평가: 3,637,601,569원이상인자로 제한</div>
<div class="t b" style="left:397px;top:1444px;letter-spacing:-.35px">자사시평: 3,164,891,000원</div>

<svg style="left:31px;top:1539px" width="12" height="18"><path d="M2 1l8 8-8 8" fill="none" stroke="#8c8c8c" stroke-width="2.600"/></svg>
<div class="t" style="left:51px;top:1548px">공고일반</div>
<div class="a" style="left:1227px;top:1516px;width:180px;height:50px;background:linear-gradient(135deg,#f1f2f6,#fff);border:2px solid #c5c7cc;border-radius:6px"></div>
<svg style="left:1243px;top:1526px" width="30" height="30"><use href="#tg"/></svg>
<div class="t" style="left:1284px;top:1541px">공고원문</div>
<div class="a" style="left:31px;top:1576px;width:1386px;height:4px;background:#b5b5b5"></div>
<div class="a" style="left:31px;top:1580px;width:1386px;height:598px;background:#fff"></div>
<div class="a" style="left:31px;top:1580px;width:341px;height:598px;background:#f7f7f7;border-left:2px solid #e2e3e6;border-right:2px solid #e2e3e6"></div>
<div class="a" style="left:31px;top:1636px;width:1386px;height:2px;background:#e2e3e6"></div>
<div class="a" style="left:31px;top:1696px;width:1386px;height:2px;background:#e2e3e6"></div>
<div class="a" style="left:31px;top:1757px;width:1386px;height:2px;background:#e2e3e6"></div>
<div class="a" style="left:31px;top:1817px;width:1386px;height:2px;background:#e2e3e6"></div>
<div class="a" style="left:31px;top:1877px;width:1386px;height:2px;background:#e2e3e6"></div>
<div class="a" style="left:31px;top:1937px;width:1386px;height:2px;background:#e2e3e6"></div>
<div class="a" style="left:31px;top:1997px;width:1386px;height:2px;background:#e2e3e6"></div>
<div class="a" style="left:31px;top:2058px;width:1386px;height:2px;background:#e2e3e6"></div>
<div class="a" style="left:31px;top:2118px;width:1386px;height:2px;background:#e2e3e6"></div>
<div class="a" style="left:31px;top:2177px;width:1386px;height:4px;background:#b5b5b5"></div>
<div class="t" style="left:53px;top:1606px">공고번호</div><div class="t" style="left:393px;top:1606px;letter-spacing:1.100px">20240638662-00</div>
<div class="t" style="left:53px;top:1665px">공고일시</div><div class="t" style="left:393px;top:1665px;letter-spacing:.5px">2024/06/28 14:00</div>
<div class="t" style="left:53px;top:1725px">공고명</div><div class="t" style="left:393px;top:1725px">김해공항 전기차 충전 기반시설 구축공사</div>
<div class="t" style="left:53px;top:1785px">공고기관</div><div class="t" style="left:393px;top:1785px">한국공항공사 김해공항</div>
<div class="t" style="left:53px;top:1845px">수요기관</div><div class="t" style="left:393px;top:1845px">한국공항공사 김해공항</div>
<div class="t" style="left:53px;top:1905px">공고담당자</div><div class="t" style="left:393px;top:1905px">박해성 ( 051-974-3335 )</div>
<div class="t" style="left:53px;top:1965px">입찰방식</div><div class="t" style="left:393px;top:1965px">전자입찰</div>
<div class="t" style="left:53px;top:2025px">계약방법</div><div class="t" style="left:393px;top:2025px">제한경쟁</div>
<div class="t" style="left:53px;top:2085px">국제입찰구분</div><div class="t" style="left:393px;top:2085px">국내입찰</div>
<div class="t" style="left:53px;top:2145px">참조번호</div><div class="t" style="left:393px;top:2145px;letter-spacing:-.2px">한국공항공사 김해공항 공고번호 제2024-113호</div>

<!-- Right panel -->
<div class="a" style="left:1455px;top:1252px;width:1417px;height:964px;border-top:3px solid #fff;border-left:2px solid #fff;border-right:2px solid #8a8a8a;border-bottom:3px solid #8a8a8a"></div>
<div class="a" style="left:2855px;top:1255px;width:15px;height:958px;background:#f6f6f8"></div>
<div class="a" style="left:2855px;top:1266px;width:15px;height:585px;background:#bdbdc0;border-radius:8px"></div>
<svg style="left:1469px;top:1281px" width="12" height="18"><path d="M2 1l8 8-8 8" fill="none" stroke="#8c8c8c" stroke-width="2.600"/></svg>
<div class="t" style="left:1495px;top:1289px">입찰가격 산정</div>
<div class="a" style="left:1470px;top:1323px;width:1385px;height:4px;background:#b5b5b5"></div>
<div class="a" style="left:1470px;top:1327px;width:1385px;height:658px;background:#fff"></div>
<div class="a" style="left:1470px;top:1327px;width:340px;height:658px;background:#f7f7f7;border-right:2px solid #e2e3e6"></div>
<div class="a" style="left:1470px;top:1384px;width:1385px;height:2px;background:#e2e3e6"></div>
<div class="a" style="left:1470px;top:1444px;width:1385px;height:2px;background:#e2e3e6"></div>
<div class="a" style="left:1470px;top:1504px;width:1385px;height:2px;background:#e2e3e6"></div>
<div class="a" style="left:1470px;top:1564px;width:1385px;height:2px;background:#e2e3e6"></div>
<div class="a" style="left:1470px;top:1624px;width:1385px;height:2px;background:#e2e3e6"></div>
<div class="a" style="left:1470px;top:1684px;width:1385px;height:2px;background:#e2e3e6"></div>
<div class="a" style="left:1470px;top:1744px;width:1385px;height:2px;background:#e2e3e6"></div>
<div class="a" style="left:1470px;top:1804px;width:1385px;height:2px;background:#e2e3e6"></div>
<div class="a" style="left:1470px;top:1864px;width:1385px;height:2px;background:#e2e3e6"></div>
<div class="a" style="left:1470px;top:1924px;width:1385px;height:2px;background:#e2e3e6"></div>
<div class="a" style="left:1470px;top:1983px;width:1385px;height:4px;background:#b5b5b5"></div>

<div class="t" style="left:1491px;top:1353px;letter-spacing:-.5px">① 기초금액</div>
<div class="t" style="right:264px;top:1353px;letter-spacing:-.65px">4,001,361,726</div><div class="t" style="left:2638px;top:1353px">원</div>
<div class="btn" style="left:2734px;top:1331px;width:75px;height:48px;line-height:42px">조회</div>
<div class="t" style="left:1491px;top:1412px;letter-spacing:-.6px">② '①' 중 순공사 원가</div>
<svg style="left:1830px;top:1398px" width="30" height="30"><use href="#q"/></svg>
<div class="t" style="left:1897px;top:1412px">②/① = 87.07</div>
<div class="t" style="right:264px;top:1412px;letter-spacing:-.65px">3,484,346,745</div><div class="t" style="left:2638px;top:1412px">원</div>
<div class="t" style="left:1491px;top:1473px">A 법정보험료</div>
<svg style="left:1830px;top:1458px" width="30" height="30"><use href="#q"/></svg>
<div class="t" style="left:1897px;top:1473px">A/① = 5.09</div>
<div class="t" style="right:264px;top:1473px;letter-spacing:-.5px">203,965,383</div><div class="t" style="left:2638px;top:1473px">원</div>
<div class="t" style="left:1491px;top:1532px;letter-spacing:-.4px">③ 예정가격</div>
<div class="in" style="left:2194px;top:1513px;width:431px;height:43px"></div>
<div class="t" style="right:277px;top:1532px">예상 예정가격</div><div class="t" style="left:2638px;top:1532px">원</div>
<div class="btn" style="left:2734px;top:1510px;width:77px;height:49px"></div>
<div class="t" style="left:2750px;top:1543px;font-size:17px">15</div><div class="t" style="left:2768px;top:1534px;font-size:29px">C</div><div class="t" style="left:2788px;top:1543px;font-size:17px">4</div>
<div class="t" style="left:1491px;top:1593px;letter-spacing:-.4px">④ 낙찰하한율</div>
<div class="in" style="left:2451px;top:1574px;width:174px;height:43px"></div>
<div class="t" style="right:277px;top:1593px">86.745</div><div class="t" style="left:2638px;top:1593px">%</div>
<div class="btn" style="left:2734px;top:1571px;width:75px;height:48px;line-height:42px">근거</div>
<div class="t" style="left:1491px;top:1652px;letter-spacing:-.4px">A 반영 ③ x ④</div>
<div class="in" style="left:2194px;top:1634px;width:431px;height:43px"></div>
<div class="t" style="right:277px;top:1653px">0</div><div class="t" style="left:2638px;top:1653px">원</div>
<div class="t" style="left:1491px;top:1713px;letter-spacing:-.4px">③ 중 ②의 98%</div>
<svg style="left:1830px;top:1699px" width="30" height="30"><use href="#q"/></svg>
<div class="in" style="left:2194px;top:1693px;width:431px;height:43px"></div>
<div class="t" style="right:277px;top:1712px">0</div><div class="t" style="left:2638px;top:1712px">원</div>
<div class="t" style="left:1491px;top:1772px">최종 입찰가격</div>
<div class="in" style="left:2194px;top:1753px;width:431px;height:43px;background:#fbf0f0"></div>
<div class="t" style="right:277px;top:1772px;font-weight:500">0</div><div class="t" style="left:2638px;top:1772px">원</div>
<div class="btn" style="left:2734px;top:1753px;width:75px;height:44px;line-height:38px;background:#fbf0f0;border-top:2px solid #999">저장</div>
<div class="t" style="left:1491px;top:1833px">한글 입찰가격</div><div class="t" style="left:2638px;top:1833px">원</div>
<div class="t" style="left:1491px;top:1892px">예정/기초(사정율)</div>
<svg style="left:1830px;top:1878px" width="30" height="30"><use href="#q"/></svg>
<div class="in" style="left:2451px;top:1874px;width:174px;height:42px;background:#fbf0f0"></div>
<div class="t" style="right:277px;top:1892px">0</div><div class="t" style="left:2638px;top:1892px">%</div>
<div class="t" style="left:1491px;top:1952px">부족점수 가격보완</div>
<svg style="left:1830px;top:1937px" width="30" height="30"><use href="#q"/></svg>
<div class="cb" style="left:2146px;top:1940px"></div>
<div class="in" style="left:2191px;top:1932px;width:88px;height:43px"></div>
<div class="t" style="left:2291px;top:1952px">점</div>
<div class="a" style="left:2451px;top:1932px;width:174px;height:43px;background:#dcdcdc"></div>
<div class="t" style="left:2638px;top:1952px">%</div>
<div class="btn" style="left:2734px;top:1929px;width:75px;height:49px;line-height:42px">근거</div>

<svg style="left:1469px;top:2051px" width="12" height="18"><path d="M2 1l8 8-8 8" fill="none" stroke="#8c8c8c" stroke-width="2.600"/></svg>
<div class="t" style="left:1495px;top:2060px">예정가격 결정</div>
<div class="a" style="left:1470px;top:2088px;width:1385px;height:63px;border:2px solid #8f8f8f;border-left:2px solid #8f8f8f;border-right:2px solid #8f8f8f"></div>
<div class="a" style="left:1470px;top:2151px;width:1385px;height:51px;background:#fff"></div>
<div class="l" style="left:1700px;top:2088px;width:2px;height:62px;background:#8f8f8f"></div>
<div class="l" style="left:1931px;top:2088px;width:2px;height:62px;background:#8f8f8f"></div>
<div class="l" style="left:2162px;top:2088px;width:2px;height:62px;background:#8f8f8f"></div>
<div class="l" style="left:2393px;top:2088px;width:2px;height:62px;background:#8f8f8f"></div>
<div class="l" style="left:2624px;top:2088px;width:2px;height:62px;background:#8f8f8f"></div>
<div class="l" style="left:1700px;top:2151px;width:2px;height:51px;background:#e2e3e6"></div>
<div class="l" style="left:1931px;top:2151px;width:2px;height:51px;background:#e2e3e6"></div>
<div class="l" style="left:2162px;top:2151px;width:2px;height:51px;background:#e2e3e6"></div>
<div class="l" style="left:2393px;top:2151px;width:2px;height:51px;background:#e2e3e6"></div>
<div class="l" style="left:2624px;top:2151px;width:2px;height:51px;background:#e2e3e6"></div>
<div class="t c" style="left:1585px;top:2116px">예가방법</div>
<div class="t c" style="left:1816px;top:2116px">예가범위</div>
<div class="t c" style="left:2047px;top:2116px">예가추첨</div>
<div class="t c" style="left:2278px;top:2116px">예비가격</div>
<div class="t c" style="left:2509px;top:2116px">추첨번호</div>
<div class="t c" style="left:2740px;top:2116px">낙찰하한</div>
<div class="t c" style="left:1585px;top:2176px">복수예가</div>
<div class="t c" style="left:1816px;top:2176px">98 ~ 102</div>
<div class="t c" style="left:2047px;top:2176px;letter-spacing:-.4px">4(추첨)/15(총)</div>
<div class="t c" style="left:2278px;top:2176px">비공개</div>
<div class="t c" style="left:2509px;top:2176px">비공개</div>
<div class="t c" style="left:2740px;top:2176px">86.745 %</div>
</body></html>
